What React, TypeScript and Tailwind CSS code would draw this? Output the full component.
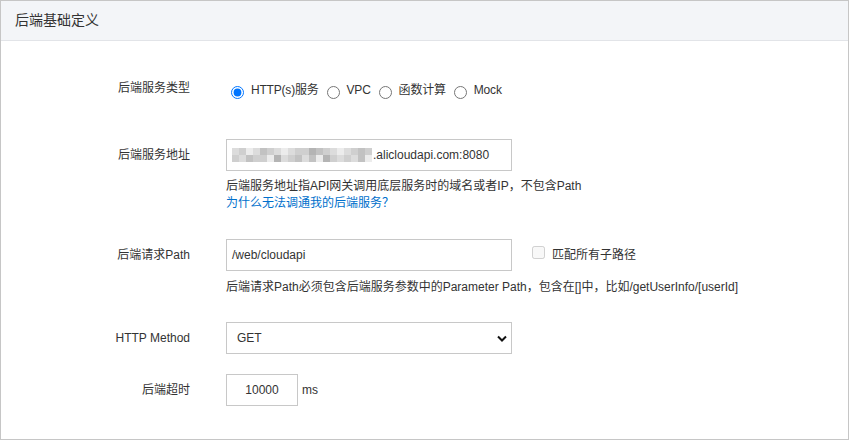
import React from 'react'

// Pixelated (masked) host name, two rows of 7px squares
const shades = ['bg-[#ececec]', 'bg-[#dcdcdc]', 'bg-[#cfcfcf]', 'bg-[#c2c2c2]', 'bg-[#b4b4b4]']
const mask = ['12013210122432101232', '21322041231304212130']

const Label = ({ children }: { children: React.ReactNode }) => (
  <div className="w-[189px] shrink-0 text-right leading-[18px]">{children}</div>
)

const Radio = ({ label, checked }: { label: string; checked?: boolean }) => (
  <label className="flex items-start mr-[3px]">
    <input type="radio" name="backendType" defaultChecked={checked} className="ml-[5px] mt-[5px] w-[13px] h-[13px]" />
    <span className="ml-[7px] leading-[18px] tracking-[-0.2px]">{label}</span>
  </label>
)

export default function App() {
  return (
    <div className="w-[849px] h-[440px] border border-[#c6c6c6] bg-white text-[12px] text-[#333] font-['Liberation_Sans','Noto_Sans_CJK_SC',sans-serif]">
      <div className="h-[40px] bg-[#f3f5f8] border-b border-[#e2e4e8] pl-[14px] flex items-center text-[14px]">
        后端基础定义
      </div>

      <div className="pt-[38px]">
        {/* backend type */}
        <div className="flex items-start">
          <Label>后端服务类型</Label>
          <div className="ml-[36px] mt-[2px] flex items-start">
            <Radio label="HTTP(s)服务" checked />
            <Radio label="VPC" />
            <Radio label="函数计算" />
            <Radio label="Mock" />
          </div>
        </div>

        {/* backend address */}
        <div className="mt-[40px] flex items-center">
          <Label>后端服务地址</Label>
          <div className="ml-[36px] w-[286px] h-[32px] border border-[#c8c8c8] flex items-center pl-[5px]">
            <div className="flex flex-col">
              {mask.map((row, r) => (
                <div key={r} className="flex">
                  {row.split('').map((c, i) => (
                    <div key={i} className={`w-[7px] h-[7px] ${shades[Number(c)]}`} />
                  ))}
                </div>
              ))}
            </div>
            <span className="ml-px">.alicloudapi.com:8080</span>
          </div>
        </div>
        <div className="pl-[225px] mt-[7px] leading-[17px]">
          <div>后端服务地址指API网关调用底层服务时的域名或者IP，不包含Path</div>
          <a className="text-[#0070cc]">为什么无法调通我的后端服务？</a>
        </div>

        {/* request path */}
        <div className="mt-[27px] flex items-center">
          <Label>后端请求Path</Label>
          <div className="ml-[36px] w-[286px] h-[32px] border border-[#c8c8c8] flex items-center pl-[5px]">
            /web/cloudapi
          </div>
          <input type="checkbox" disabled className="ml-[20px] mb-[6px] w-[13px] h-[13px]" />
          <span className="ml-[7px] leading-[18px]">匹配所有子路径</span>
        </div>
        <div className="pl-[225px] mt-[8px] leading-[17px]">
          后端请求Path必须包含后端服务参数中的Parameter Path，包含在[]中，比如/getUserInfo/[userId]
        </div>

        {/* method */}
        <div className="mt-[26px] flex items-center">
          <Label>HTTP Method</Label>
          <div className="ml-[36px] w-[286px] h-[32px] border border-[#c8c8c8] flex items-center justify-between pl-[10px] pr-[4px]">
            <span>GET</span>
            <svg width="10" height="7" viewBox="0 0 10 7" fill="none" stroke="#111" strokeWidth="2">
              <path d="M1 1.5l4 4 4-4" />
            </svg>
          </div>
        </div>

        {/* timeout */}
        <div className="mt-[20px] flex items-center">
          <Label>后端超时</Label>
          <div className="ml-[36px] w-[72px] h-[32px] border border-[#c8c8c8] flex items-center justify-center">
            10000
          </div>
          <span className="ml-[4px]">ms</span>
        </div>
      </div>
    </div>
  )
}
